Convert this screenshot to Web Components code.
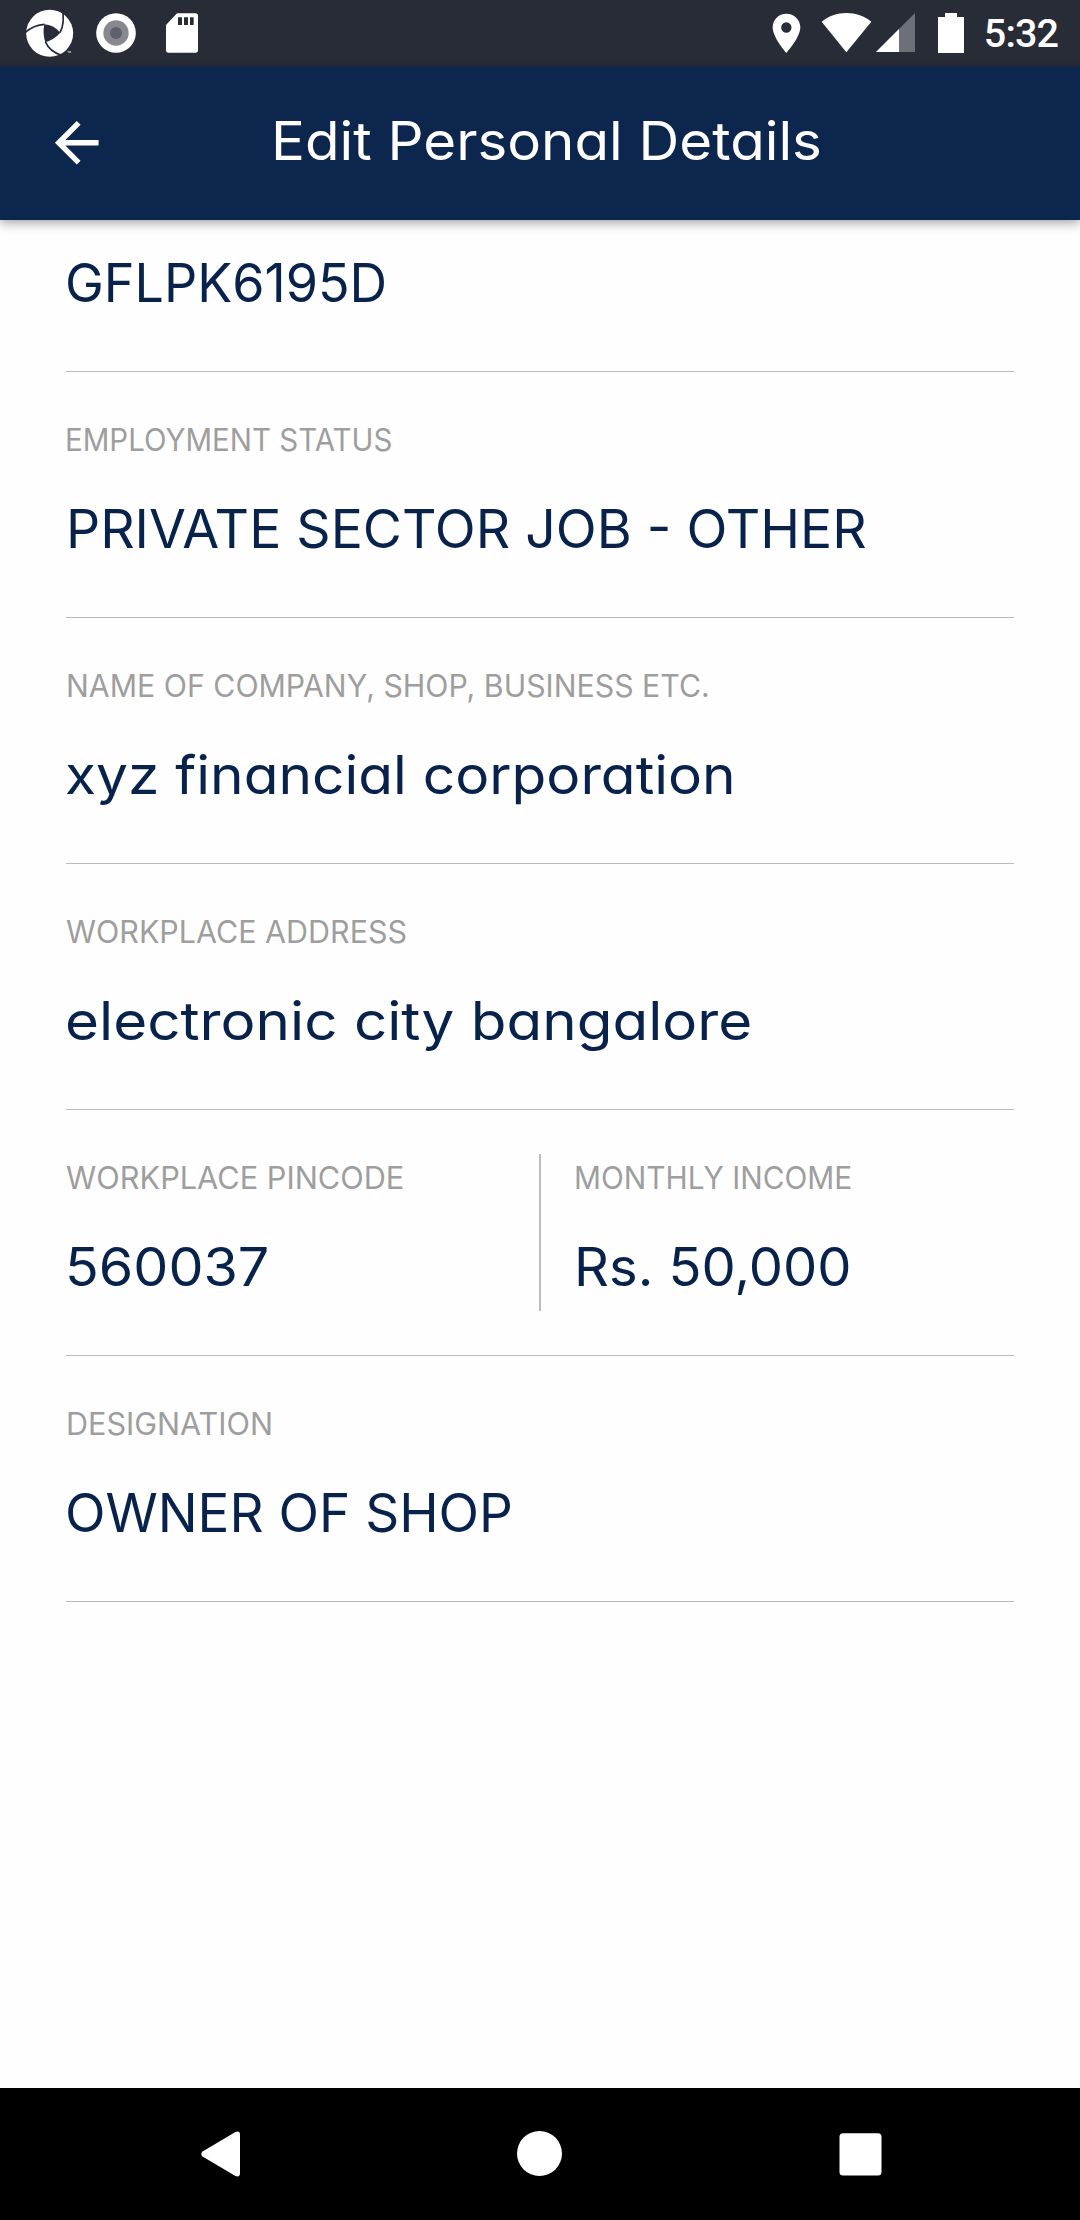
<!DOCTYPE html>
<html lang="en">
<head>
<meta charset="utf-8">
<title>Edit Personal Details</title>
<style>
html, body { margin: 0; background: #fefefe; }
body { font-family: Inter, "Open Sans", sans-serif; font-optical-sizing: none; }
</style>
</head>
<body>
<app-screen>
  <status-bar slot="top"></status-bar>
  <title-bar slot="top"><fit-text w="544.5">Edit Personal Details</fit-text></title-bar>
  <detail-row short><detail-field><fit-text slot="value" w="317" x="1.8">GFLPK6195D</fit-text></detail-field></detail-row>
  <detail-row><detail-field><fit-text slot="label" w="324" x="1.2">EMPLOYMENT STATUS</fit-text><fit-text slot="value" w="795.5" x="4">PRIVATE SECTOR JOB - OTHER</fit-text></detail-field></detail-row>
  <detail-row><detail-field><fit-text slot="label" w="640" x="1.5">NAME OF COMPANY, SHOP, BUSINESS ETC.</fit-text><fit-text slot="value" w="666" x="0.4">xyz financial corporation</fit-text></detail-field></detail-row>
  <detail-row><detail-field><fit-text slot="label" w="339.5" x="0.2">WORKPLACE ADDRESS</fit-text><fit-text slot="value" w="683" x="1.6">electronic city bangalore</fit-text></detail-field></detail-row>
  <detail-row split>
    <detail-field><fit-text slot="label" w="337" x="0.2">WORKPLACE PINCODE</fit-text><fit-text slot="value" w="198" x="3.2">560037</fit-text></detail-field>
    <detail-field second><fit-text slot="label" w="275" x="2">MONTHLY INCOME</fit-text><fit-text slot="value" w="271" x="4">Rs. 50,000</fit-text></detail-field>
  </detail-row>
  <detail-row><detail-field><fit-text slot="label" w="203" x="1.6">DESIGNATION</fit-text><fit-text slot="value" w="442" x="2">OWNER OF SHOP</fit-text></detail-field></detail-row>
  <nav-bar slot="bottom"></nav-bar>
</app-screen>
<script>
const define = (name, html) => customElements.define(name, class extends HTMLElement {
  connectedCallback() {
    if (this.shadowRoot) return;
    this.attachShadow({ mode: 'open' }).innerHTML = html;
  }
});

define('app-screen', `<style>
:host { display: flex; flex-direction: column; width: 1080px; height: 2220px; overflow: hidden; }
header { position: relative; z-index: 1; flex: none; }
main { flex: 1; min-height: 0; padding: 0 66px; }
</style><header><slot name="top"></slot></header><main><slot></slot></main><slot name="bottom"></slot>`);

define('status-bar', `<style>
:host { display: flex; box-sizing: border-box; height: 66px; background: #282c37; justify-content: space-between; }
svg { display: block; flex: none; }
.right { display: flex; margin-right: 22px; }
.time { font: 500 39.500px/66px Roboto, sans-serif; color: #fff; margin-left: 16.500px; letter-spacing: -.9px; padding-top: 1px; }
</style>
<svg width="220" height="66" viewBox="0 0 660 198">
  <circle cx="149" cy="100" r="70.500" fill="#fff"/>
  <g fill="none" stroke="#282c37" stroke-width="5">
    <path d="M180 98Q196 68 186 24"/><path d="M134 73Q101 74 74 99"/><path d="M136 125Q148 154 184 166"/>
  </g>
  <path d="M133 73Q160 74 181 98Q163 118 136 127Q127 100 133 73Z" fill="#282c37"/>
  <path d="M202 154h4v5m2 0v-5l2 3 2-3v5" fill="none" stroke="#fff" stroke-width="1.300"/>
  <circle cx="348" cy="99" r="59.500" fill="#fff"/><circle cx="348" cy="99" r="38" fill="#868990"/><circle cx="348" cy="99" r="18" fill="#5e616a"/>
  <path fill="#fff" fill-rule="evenodd" d="M531 40H586Q594 40 594 48V150Q594 158 586 158H506Q498 158 498 150V75ZM534 52V75H546V52ZM552 52V75H564V52ZM570 52V75H581V52Z"/>
</svg>
<div class="right">
<svg width="216" height="66" viewBox="0 0 648 198" fill="#fff">
  <path fill-rule="evenodd" d="M106 41C83 41 65 59 65 82C65 113 106 159 106 159S148 113 148 82C148 59 129 41 106 41ZM106 67a15.500 15.500 0 1 1 0 31a15.500 15.500 0 0 1 0-31Z"/>
  <path d="M286 157L212 65C232 48 258 39 286 39S341 48 361 65Z"/>
  <path d="M375 156L492 39V156Z" fill="#6d7079"/><path d="M375 156L444 87V156Z"/>
  <path d="M561 51H582V39H618V51H639V159H561Z"/>
</svg>
<div class="time">5:32</div>
</div>`);

define('title-bar', `<style>
:host { display: flex; height: 154px; background: #0d264e; color: #fff; box-shadow: 0 3px 10px rgba(0,0,0,.36); }
svg { display: block; flex: none; margin: 44.200px 0 0 43.500px; }
div { margin: 40px 0 0 165.800px; font-size: 53px; line-height: 70px; }
</style><svg width="65.500" height="65.500" viewBox="0 0 24 24" fill="#fff"><path d="M20 11H7.830l5.590-5.590L12 4l-8 8 8 8 1.410-1.410L7.830 13H20z"/></svg><div><slot></slot></div>`);

define('detail-row', `<style>
:host { display: flex; box-sizing: border-box; height: 246px; padding-top: 44px; border-bottom: 1px solid #b9b9b9; }
:host([short]) { height: 152px; padding: 0 0 44px; align-items: flex-end; }
::slotted(detail-field) { flex: 1; }
::slotted(detail-field[second]) { flex: 0 0 475px; }
</style><slot></slot>`);

define('detail-field', `<style>
:host { display: flex; flex-direction: column; height: 157px; box-sizing: border-box; }
:host([second]) { border-left: 2px solid #bcbcbc; padding-left: 33px; }
.label { flex: none; height: 78px; font-size: 30.500px; line-height: 48px; color: #9e9e9e; }
.value { flex: none; font-size: 53px; line-height: 70px; color: #08224c; }
</style><div class="label"><slot name="label"></slot></div><div class="value"><slot name="value"></slot></div>`);

/* Single-line text widened or narrowed so that its visible glyphs span w pixels, starting x pixels in. */
define('fit-text', `<style>
:host { display: block; white-space: pre; }
span { display: inline-block; transform-origin: 0 50%; font-feature-settings: "cv11" 1; }
</style><span><slot></slot></span>`);

define('nav-bar', `<style>
:host { display: flex; flex: none; height: 132px; background: #000; align-items: center; justify-content: space-between; padding: 0 198px 0 201px; box-sizing: border-box; }
svg { display: block; }
</style>
<svg width="39" height="46" viewBox="0 0 39 46" fill="#fff"><path d="M1.500 20.500L34 1.200Q39-1 39 4V42Q39 47 34 44.800L1.500 25.500Q-1 23 1.500 20.500Z"/></svg>
<svg width="46" height="46" viewBox="0 0 46 46" fill="#fff"><circle cx="22.500" cy="22.500" r="22.500"/></svg>
<svg width="43" height="46" viewBox="0 0 43 46" fill="#fff"><rect x=".5" y="2.200" width="42" height="42.300" rx="3.500"/></svg>`);

const ctx = document.createElement('canvas').getContext('2d');
for (const el of document.querySelectorAll('fit-text')) {
  const text = el.textContent, span = el.shadowRoot.querySelector('span');
  const cs = getComputedStyle(span);
  ctx.font = `${cs.fontWeight} ${cs.fontSize} ${cs.fontFamily}`;
  const first = ctx.measureText(text[0]), last = ctx.measureText(text.at(-1));
  const lsb = -first.actualBoundingBoxLeft, rsb = last.width - last.actualBoundingBoxRight;
  const natural = span.getBoundingClientRect().width - lsb - rsb;
  const scale = Number(el.getAttribute('w')) / natural;
  span.style.transform = `scaleX(${scale})`;
  span.style.marginLeft = Number(el.getAttribute('x') || 0) - lsb * scale + 'px';
}
</script>
</body>
</html>
